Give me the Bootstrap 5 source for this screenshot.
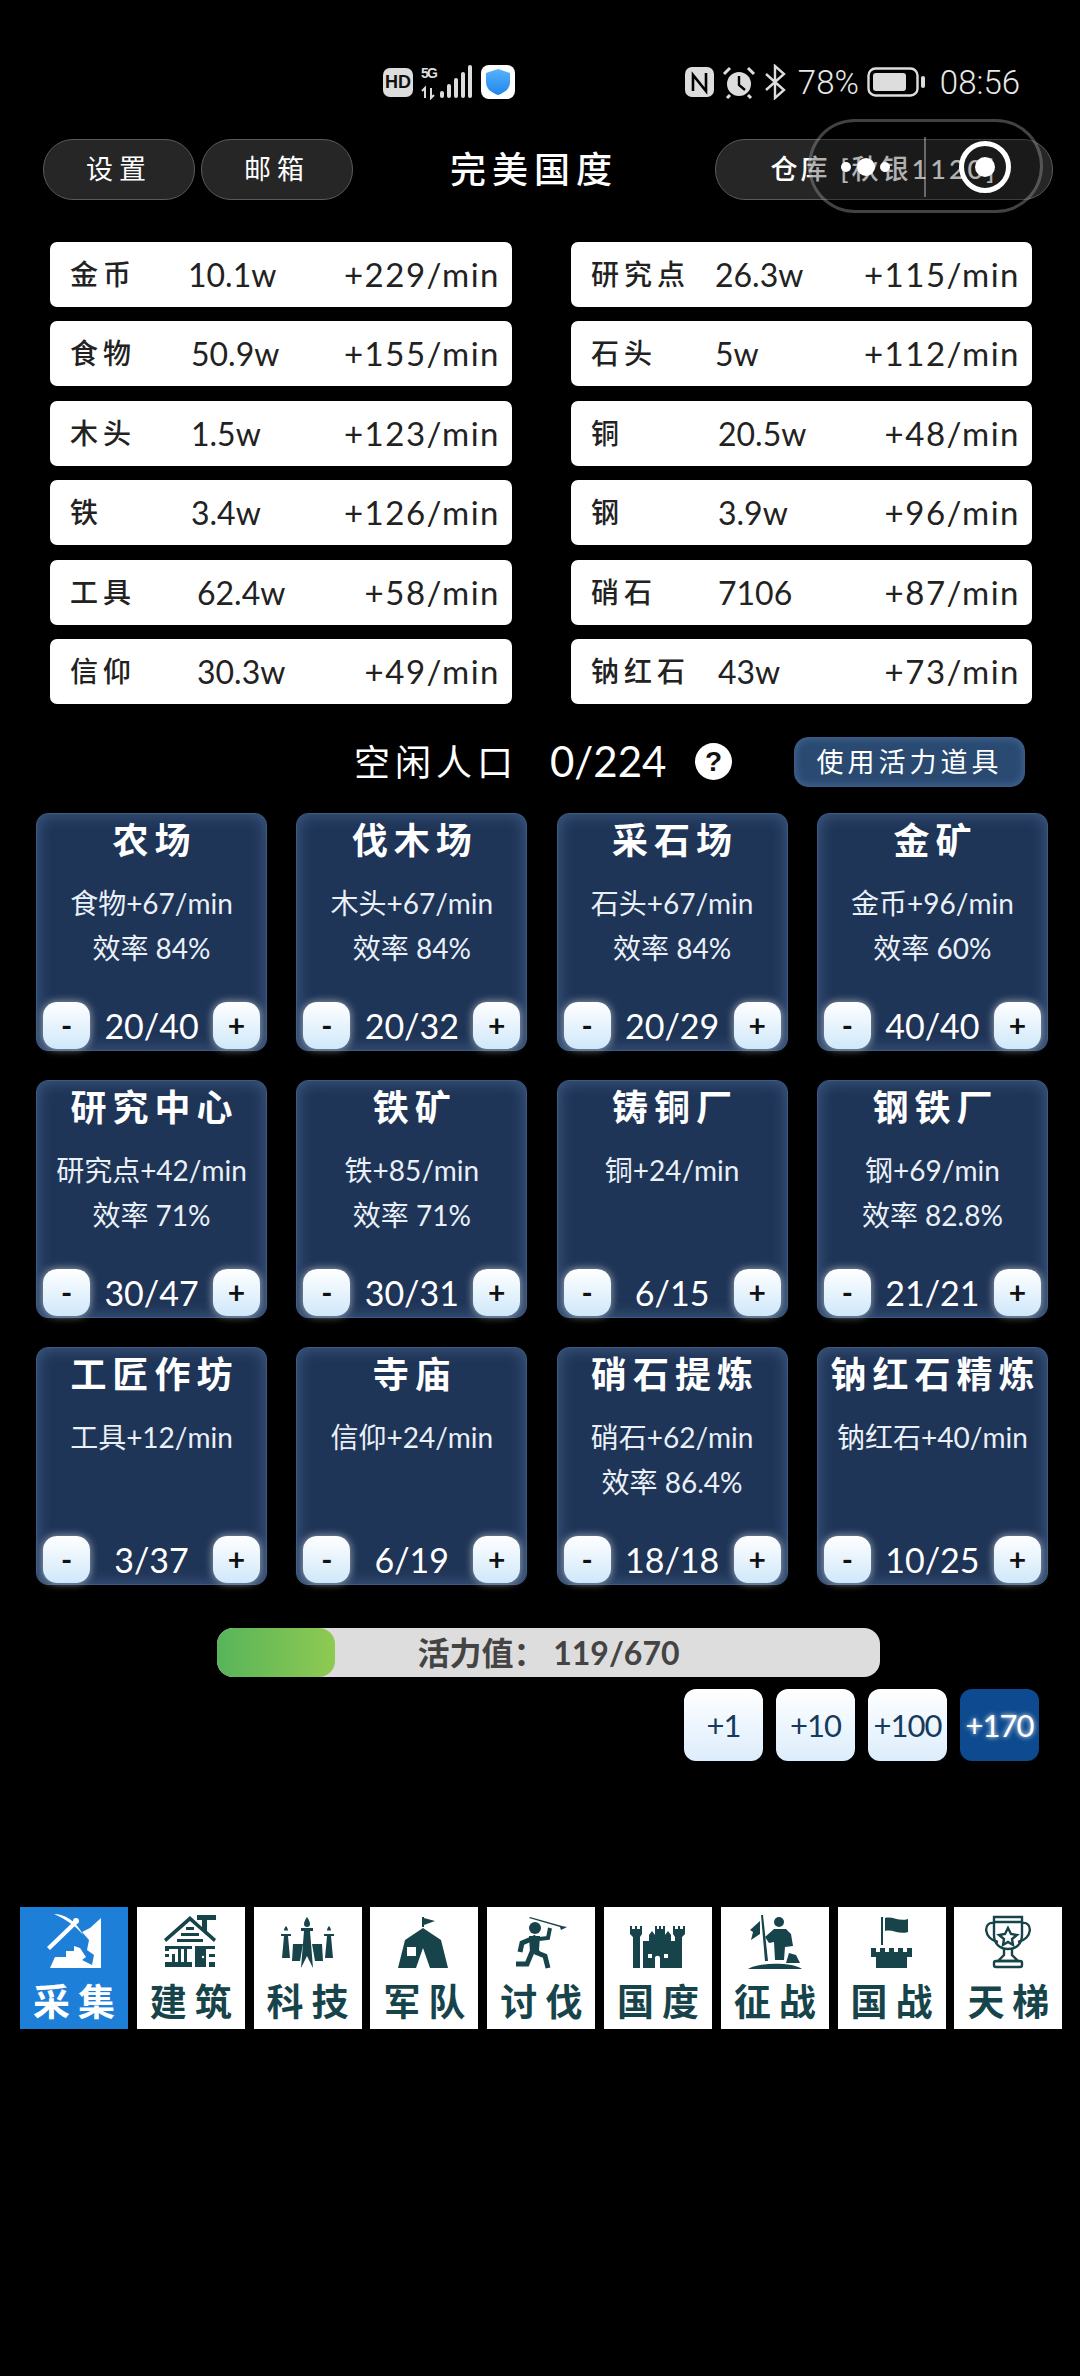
<!DOCTYPE html>
<html lang="zh-CN">
<head>
  <meta charset="UTF-8" />
  <meta name="viewport" content="width=device-width, initial-scale=1" />
  <title>完美国度</title>
  <link href="https://cdn.jsdelivr.net/npm/bootstrap@5.3.0/dist/css/bootstrap.min.css" rel="stylesheet" />
  <style>
    html, body { background: #000; }
    body {
      position: relative;
      min-height: 2376px;
      font-family: Lato, "Noto Sans CJK SC", sans-serif;
      color: #fff;
    }
    /* системная строка */
    .status-line { height: 139px; padding: 25px 60px 0 383px; }
    .status-txt { font-family: Roboto, sans-serif; font-weight: 300; font-size: 33px; color: #e8e8e8; line-height: 1; }
    .hd-tile {
      width: 30px; height: 29px; border-radius: 7px; background: #ddd; color: #111;
      font: 700 18px/29px "Liberation Sans", sans-serif; text-align: center;
    }
    /* верх */
    .top-bar { height: 61px; padding-left: 43px; }
    .pill-btn {
      height: 61px; border-radius: 30px; background: #262626; border: 1px solid #5a5a5a;
      color: #fff; font-size: 27px; letter-spacing: 6px; padding: 0;
    }
    .pill-btn:hover { background: #262626; color: #fff; border-color: #5a5a5a; }
    .pill-short { width: 152px; }
    .pill-store { width: 338px; letter-spacing: 3px; font-weight: 500; }
    .page-title { font-size: 36px; letter-spacing: 6px; font-weight: 500; line-height: 61px; }
    .mini-capsule {
      position: absolute; left: 808px; top: 119px; width: 235px; height: 94px;
      border-radius: 47px; border: 3px solid rgba(255,255,255,.26); background: rgba(0,0,0,.3);
    }
    .mini-capsule i { position: absolute; display: block; border-radius: 50%; background: #fff; }
    .mini-div { position: absolute; left: 113px; top: 15px; width: 2px; height: 60px; background: rgba(255,255,255,.35); }
    .mini-ring { left: 148px; top: 19px; width: 52px; height: 52px; background: transparent !important; border: 5px solid #fff; }
    /* ресурсы */
    .res-grid {
      display: grid; grid-template-columns: 462px 461px; grid-auto-rows: 65px;
      column-gap: 59px; row-gap: 14.4px; margin-top: 42px; padding-left: 50px;
    }
    .res-row {
      background: #fff; border-radius: 7px; color: #222; padding: 0 15px 0 20px;
      font-size: 32px; line-height: 65px; white-space: nowrap;
    }
    .res-name { font-size: 28px; letter-spacing: 5px; font-weight: 500; }
    .res-rate { font-size: 33px; letter-spacing: 1.500px; margin: 0 -3px 0 auto; }
    /* население */
    .idle-line { height: 50px; margin-top: 33px; padding-left: 354px; }
    .idle-label { font-size: 36px; letter-spacing: 5px; width: 196px; }
    .idle-count { font-size: 42px; width: 145px; }
    .idle-help {
      width: 37px; height: 37px; border-radius: 50%; background: #fff; color: #111;
      font: 700 28px/37px "Liberation Sans", sans-serif; text-align: center;
    }
    .vigor-item {
      width: 231px; height: 50px; margin-left: 62px; padding: 0; border-radius: 14px; border: 1px solid #3a5a85;
      background: #2a4a72; color: #fff; font-size: 27px; letter-spacing: 4px; white-space: nowrap;
      box-shadow: inset 0 0 8px rgba(130,170,220,.35);
    }
    /* постройки */
    .bld-grid {
      display: grid; grid-template-columns: repeat(4, 231px); grid-auto-rows: 238px;
      column-gap: 29.3px; row-gap: 29px; margin-top: 26px; padding-left: 36px;
    }
    .bld-card {
      background: #1f3557; border: 1px solid #3c5a82; border-radius: 12px; color: #fff;
      padding: 0 6px 1px; align-items: center;
      box-shadow: inset 0 0 16px rgba(120,160,210,.38);
    }
    .bld-title { font-size: 36px; line-height: 52px; letter-spacing: 6px; font-weight: 700; white-space: nowrap; margin: 0 -6px 15px 0; }
    .bld-info { font-size: 28px; line-height: 45px; color: #eaf0f7; white-space: nowrap; }
    .step-btn {
      width: 47px; height: 47px; padding: 0; border: 0; border-radius: 14px; color: #111;
      background: linear-gradient(#fff, #cfe8fa); font-size: 30px; font-weight: 700; line-height: 44px;
      box-shadow: 0 0 9px rgba(255,255,255,.6);
    }
    .step-num { font-size: 34px; line-height: 47px; }
    /* активность */
    .vigor-bar {
      position: relative; width: 663px; height: 49px; margin: 43px 0 0 217px;
      border-radius: 16px; background: #ddd;
    }
    .vigor-bar .progress-bar { background: linear-gradient(90deg, #57b45a, #8fca52); border-radius: 16px; }
    .vigor-text {
      position: absolute; inset: 0; text-align: center; color: #444; font-size: 32px; line-height: 49px; font-weight: 700;
    }
    .add-line { margin-top: 12px; padding-left: 684px; gap: 13px; }
    .add-btn {
      width: 79px; height: 72px; padding: 0; border: 0; border-radius: 12px; color: #163a5c; font-size: 31px;
      background: linear-gradient(#fff, #dcedfc); letter-spacing: -1px;
    }
    .add-btn.is-on, .add-btn.is-on:hover { background: #0d4a8f; color: #fff; text-shadow: 0 0 5px #fff; }
    .add-btn:hover { color: #163a5c; }
    /* вкладки */
    .tab-line { margin-top: 146px; padding-left: 20px; gap: 8.8px; }
    .tab-cell {
      width: 108px; height: 122px; background: #fff; color: #17444a; text-align: center; padding-top: 3px;
    }
    .tab-cell svg { display: block; margin: 0 auto; fill: #17444a; }
    .tab-cell.is-on { background: #1e7fd8; color: #fff; }
    .tab-cell.is-on svg { fill: #fff; }
    .tab-name { font-size: 37px; line-height: 40px; letter-spacing: 8px; margin-right: -8px; font-weight: 700; margin-top: 8px; }
  </style>
</head>
<body>
  <div class="status-line d-flex justify-content-between align-items-center">
    <div class="d-flex align-items-center">
      <div class="hd-tile">HD</div>
      <svg width="60" height="36" viewBox="0 0 60 36" class="ms-2">
        <text x="0" y="14" font-family="Liberation Sans" font-weight="700" font-size="14" fill="#ddd" textLength="17">5G</text>
        <path d="M4 34V24l-3 3M10 24v10l3-3" stroke="#ddd" stroke-width="2" fill="none" />
        <rect x="19" y="27" width="4" height="7" rx="2" fill="#ddd" />
        <rect x="26" y="20" width="4" height="14" rx="2" fill="#ddd" />
        <rect x="33" y="14" width="4" height="20" rx="2" fill="#ddd" />
        <rect x="40" y="8" width="4" height="26" rx="2" fill="#ddd" />
        <rect x="47" y="1" width="4" height="33" rx="2" fill="#ddd" />
      </svg>
      <svg width="34" height="34" viewBox="0 0 34 34">
        <defs><linearGradient id="shieldBlue" x1="0" y1="0" x2="0" y2="1"><stop offset="0" stop-color="#58b2ff" /><stop offset="1" stop-color="#1f86ea" /></linearGradient></defs>
        <rect width="34" height="34" rx="8" fill="#fff" />
        <path d="M17 4l12 4v9c0 7-6 11-12 13C11 28 5 24 5 17V8z" fill="url(#shieldBlue)" />
      </svg>
    </div>
    <div class="d-flex align-items-center">
      <svg width="29" height="30" viewBox="0 0 29 30">
        <rect width="29" height="30" rx="7" fill="#ddd" />
        <path d="M8 24V8l13 16V6" stroke="#000" stroke-width="2.6" fill="none" />
      </svg>
      <svg width="34" height="34" viewBox="0 0 34 34" class="ms-2">
        <circle cx="17" cy="19" r="12" fill="#ddd" />
        <path d="M17 11v9l6 5" stroke="#000" stroke-width="2.4" fill="none" />
        <path d="M2 9l6-6M32 9l-6-6M8 30l-3 3M26 30l3 3" stroke="#ddd" stroke-width="3" fill="none" />
      </svg>
      <svg width="22" height="36" viewBox="0 0 22 36" class="ms-2">
        <path d="M2 10l18 16-9 8V2l9 8L2 26" stroke="#ddd" stroke-width="2.4" fill="none" />
      </svg>
      <span class="status-txt" style="margin-left:12px">78%</span>
      <svg width="60" height="30" viewBox="0 0 60 30" class="ms-2">
        <rect x="1.5" y="1.5" width="49" height="27" rx="7" fill="none" stroke="#ddd" stroke-width="2.4" />
        <rect x="6" y="6" width="33" height="18" rx="3" fill="#ddd" />
        <rect x="54" y="9" width="4" height="12" rx="2" fill="#ddd" />
      </svg>
      <span class="status-txt" style="margin-left:13px">08:56</span>
    </div>
  </div>

  <div class="top-bar d-flex">
    <button class="btn pill-btn pill-short" type="button">设置</button>
    <button class="btn pill-btn pill-short" type="button" style="margin-left:6px">邮箱</button>
    <div class="page-title flex-grow-1 text-center">完美国度</div>
    <button class="btn pill-btn pill-store" type="button" style="margin-right:27px">仓库 [秋银1120]</button>
  </div>
  <div class="mini-capsule">
    <i style="left:30px;top:40px;width:10px;height:10px"></i>
    <i style="left:46px;top:36px;width:18px;height:18px"></i>
    <i style="left:69px;top:40px;width:10px;height:10px"></i>
    <div class="mini-div"></div>
    <i class="mini-ring"></i>
    <i style="left:164px;top:35px;width:20px;height:20px"></i>
  </div>

  <div class="res-grid" id="resGrid"></div>

  <div class="idle-line d-flex align-items-center">
    <div class="idle-label">空闲人口</div>
    <div class="idle-count">0/224</div>
    <div class="idle-help">?</div>
    <button class="btn vigor-item" type="button">使用活力道具</button>
  </div>

  <div class="bld-grid" id="bldGrid"></div>

  <div class="progress vigor-bar">
    <div class="progress-bar" id="vigorFill" role="progressbar" aria-label="活力值"></div>
    <div class="vigor-text">活力值： 119/670</div>
  </div>
  <div class="add-line d-flex">
    <button class="btn add-btn" type="button">+1</button>
    <button class="btn add-btn" type="button">+10</button>
    <button class="btn add-btn" type="button">+100</button>
    <button class="btn add-btn is-on" type="button">+170</button>
  </div>

  <div class="tab-line d-flex" id="tabLine"></div>

  <script src="https://cdn.jsdelivr.net/npm/bootstrap@5.3.0/dist/js/bootstrap.bundle.min.js"></script>
  <script>
    // название, запас, прирост, ширина колонки названия
    const resources = [
      ["金币", "10.1w", "+229/min", 118], ["研究点", "26.3w", "+115/min", 124],
      ["食物", "50.9w", "+155/min", 121], ["石头", "5w", "+112/min", 124],
      ["木头", "1.5w", "+123/min", 121], ["铜", "20.5w", "+48/min", 127],
      ["铁", "3.4w", "+126/min", 121], ["钢", "3.9w", "+96/min", 127],
      ["工具", "62.4w", "+58/min", 127], ["硝石", "7106", "+87/min", 127],
      ["信仰", "30.3w", "+49/min", 127], ["钠红石", "43w", "+73/min", 127]
    ];

    const buildings = [
      ["农场", "食物+67/min", "效率 84%", "20/40"],
      ["伐木场", "木头+67/min", "效率 84%", "20/32"],
      ["采石场", "石头+67/min", "效率 84%", "20/29"],
      ["金矿", "金币+96/min", "效率 60%", "40/40"],
      ["研究中心", "研究点+42/min", "效率 71%", "30/47"],
      ["铁矿", "铁+85/min", "效率 71%", "30/31"],
      ["铸铜厂", "铜+24/min", "", "6/15"],
      ["钢铁厂", "钢+69/min", "效率 82.8%", "21/21"],
      ["工匠作坊", "工具+12/min", "", "3/37"],
      ["寺庙", "信仰+24/min", "", "6/19"],
      ["硝石提炼", "硝石+62/min", "效率 86.4%", "18/18"],
      ["钠红石精炼", "钠红石+40/min", "", "10/25"]
    ];

    // иконки вкладок, сетка 64x64
    const tabs = [
      ["采集", `<path d="M59 8V58H8l5-11h11v-6h8v-5l6 2 6 9-4 3 10 5 2-10-7-5 2-10-7-8 8-4z"/><path d="M5 37L32 11l3 3L8 40z"/><path d="M12 4c10 0 22 6 29 21-7-9-16-15-29-21z"/><circle cx="34" cy="11" r="3"/>`],
      ["建筑", `<path d="M31 6L5 29l2 3L31 11l24 21 2-3-9-8V10h9V5H38v5h5v7z"/><path d="M18 29h26v3H18zM22 23h18v3H22zM27 17h8v3h-8z"/><path d="M6 36h27v3H6zM6 44h4v3H6zM13 44h3v9h-3zM19 39h3v13h-3zM25 39h3v13h-3zM6 52h27v5H6zM6 37h4v4H6z"/><path d="M36 36h20v3H36zM36 39h11v18H36zM50 44h6v3h-6zM50 52h6v5h-6z"/><circle cx="44" cy="47" r="1.2" fill="#fff"/>`],
      ["科技", `<path d="M31 7c2 3 3 5 3 7s-1 3-3 3-3-1-3-3 1-4 3-7zM25 18h12v3h-3l3 37-6-12-6 12 3-37h-3z"/><path d="M10 16c1.500 2 2 3 2 4.500h-4c0-1.500.5-2.500 2-4.500zM5 24h10v2h-3l2 22h-8l2-22H5z"/><path d="M53 16c1.500 2 2 3 2 4.500h-4c0-1.500.5-2.500 2-4.500zM48 24h10v2h-3l2 22h-8l2-22h-3z"/><path d="M17 34h10l-3 17H16zM36 34h10l1 17h-8z"/>`],
      ["军队", `<path d="M30 7h2v10h-2zM32 8l11 3-11 4z"/><path fill-rule="evenodd" d="M31 18l18 12 7 28H38l-7-20-7 20H6l7-28zM15 37v9h9v-9z"/>`],
      ["讨伐", `<circle cx="26" cy="18" r="6"/><path d="M21 7l32 9 5 1-6 3-1-3-31-9z"/><path d="M30 29l9-1 2-10" fill="none" stroke="#17444a" stroke-width="4"/><path d="M27 27l-14 6-2 9M23 42l-5 12H7M26 42l10 4 3 12" fill="none" stroke="#17444a" stroke-width="5"/><path d="M20 26h11l-1 14 3 5-12-2z"/>`],
      ["国度", `<path fill-rule="evenodd" d="M17 31h6v-6l3-4 3 4v-9h2v3h2v-3h2v3h2v-3h2v9l3-4 3 4v6h6v27H17zM34 58V48c0-3-5-3-5 0v10zM22 44v4h4v-4zM38 44v4h4v-4z"/><path d="M4 16h2v3h3v-3h2v3h3v-3h2v8l-2 3v31H7V27l-3-3zM47 16h2v3h3v-3h2v3h3v-3h2v8l-3 3v31h-7V27l-2-3z"/>`],
      ["征战", `<path d="M18 5h2l5 46h-3z"/><path d="M17 11v13l-9 6 2-8-3-2z"/><circle cx="36" cy="12" r="5"/><path d="M22 27l9-8h12l5 5 2 12-8 1-1 13h-9l-1-18-5 1z"/><path d="M46 43l7 2 4 8H43z"/><path d="M5 59c10-7 45-7 54 0z"/>`],
      ["国战", `<path d="M21 7h2v28h-2z"/><path d="M25 8c8-2 14 4 23 1v13c-9 3-15-3-23-1z"/><path d="M11 38h5v4h4v-4h5v4h4v-4h5v4h4v-4h5v4h4v-4h5v9h-5v11H16V47h-5z"/>`],
      ["天梯", `<g fill="none" stroke="#17444a" stroke-width="2.400"><path d="M18 7h28v18c0 9-6 14-14 14s-14-5-14-14zM18 12h28"/><path d="M18 13c-11-2-11 16 4 19M46 13c11-2 11 16-4 19"/><path d="M28 39v6l-6 6h20l-6-6v-6"/><rect x="18" y="51" width="28" height="6" rx="2"/><path d="M32 18l3 6 6 1-5 4 1 6-5-3-5 3 1-6-5-4 6-1z"/></g>`]
    ];

    document.getElementById("resGrid").innerHTML = resources.map(r => `
      <div class="res-row d-flex">
        <span class="res-name" style="width:${r[3]}px">${r[0]}</span><span>${r[1]}</span><span class="res-rate">${r[2]}</span>
      </div>`).join("");

    document.getElementById("bldGrid").innerHTML = buildings.map(b => `
      <div class="card bld-card">
        <div class="bld-title">${b[0]}</div>
        <div class="bld-info">${b[1]}</div>
        ${b[2] ? `<div class="bld-info">${b[2]}</div>` : ""}
        <div class="mt-auto w-100 d-flex justify-content-between align-items-center">
          <button class="btn step-btn" type="button">-</button>
          <span class="step-num">${b[3]}</span>
          <button class="btn step-btn" type="button">+</button>
        </div>
      </div>`).join("");

    document.getElementById("vigorFill").style.width = (119 / 670 * 100) + "%";

    document.getElementById("tabLine").innerHTML = tabs.map((t, i) => `
      <div class="tab-cell${i === 0 ? " is-on" : ""}">
        <svg width="64" height="64" viewBox="0 0 64 64">${t[1]}</svg>
        <div class="tab-name">${t[0]}</div>
      </div>`).join("");
  </script>
</body>
</html>
